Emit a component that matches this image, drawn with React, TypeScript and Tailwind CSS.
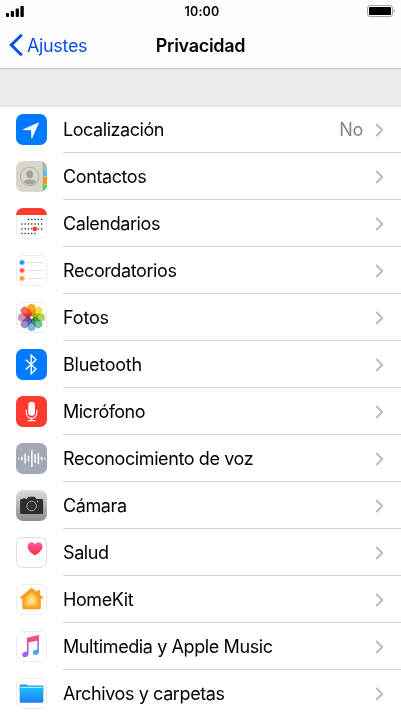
import type { ReactNode } from 'react'

type Row = {
  label: string
  icon: ReactNode
  value?: string
  tracking?: string
}

type TileProps = {
  fill?: string
  stroke?: string
  children: ReactNode
}

function Tile({ fill = '#ffffff', stroke, children }: TileProps) {
  return (
    <svg viewBox="0 0 31 31" className="block w-[31px] h-[31px] shrink-0">
      {stroke ? (
        <rect x="0.5" y="0.5" width="30" height="30" rx="6.5" fill={fill} stroke={stroke} />
      ) : (
        <rect width="31" height="31" rx="7" fill={fill} />
      )}
      {children}
    </svg>
  )
}

function LocationIcon() {
  return (
    <Tile fill="#007aff">
      <path d="M23.2 8.3 7.2 15.2c-.5.2-.4.9.2.9l7.7.2.2 7.4c0 .6.7.8 1 .2z" fill="#fff" />
    </Tile>
  )
}

function ContactsIcon() {
  return (
    <Tile fill="#d6d6cc">
      <defs>
        <clipPath id="contacts-tile">
          <rect width="31" height="31" rx="7" />
        </clipPath>
        <clipPath id="contacts-face">
          <circle cx="13.7" cy="15.5" r="8.3" />
        </clipPath>
      </defs>
      <g clipPath="url(#contacts-tile)">
        <rect x="27" width="4" height="8.5" fill="#b5b3ab" />
        <rect x="27" y="8.5" width="4" height="7" fill="#5ac1fa" />
        <rect x="27" y="16" width="4" height="7.5" fill="#ff9500" />
        <rect x="27" y="24" width="4" height="7" fill="#4cd964" />
        <rect x="26.8" width="0.5" height="31" fill="#9b9a91" />
      </g>
      <circle cx="13.7" cy="15.5" r="9.3" fill="none" stroke="#a8a59c" strokeWidth="0.9" />
      <g fill="#a8a097" clipPath="url(#contacts-face)">
        <ellipse cx="13.7" cy="13.3" rx="3.4" ry="3.9" />
        <ellipse cx="13.7" cy="23" rx="7.8" ry="4.4" />
      </g>
    </Tile>
  )
}

const calendarDots = [
  { y: 11.4, from: 2, to: 6 },
  { y: 16, from: 0, to: 6 },
  { y: 20.9, from: 0, to: 6 },
  { y: 25.5, from: 0, to: 4 },
]

function CalendarIcon() {
  return (
    <Tile stroke="#ededed">
      <path d="M0 7a7 7 0 0 1 7-7h17a7 7 0 0 1 7 7z" fill="#ff3b30" />
      {calendarDots.map(({ y, from, to }) =>
        Array.from({ length: to - from + 1 }, (_, i) => (
          <rect key={`${y}-${i}`} x={5.2 + (from + i) * 3.3} y={y - 0.65} width="1.3" height="1.3" fill="#222" />
        ))
      )}
      <circle cx="18.9" cy="20.9" r="2.3" fill="#ff3b30" />
    </Tile>
  )
}

function RemindersIcon() {
  const lines = [
    { y: 7.5, color: '#1685fb', halo: '#9bcbfd' },
    { y: 15.5, color: '#fc4b43', halo: '#fdb0ac' },
    { y: 23.5, color: '#fb9a18', halo: '#fdd093' },
  ]
  return (
    <Tile stroke="#ededed">
      {lines.map(({ y, color, halo }) => (
        <g key={y}>
          <circle cx="6" cy={y} r="3" fill={halo} />
          <circle cx="6" cy={y} r="1.8" fill={color} />
          <path d={`M11.5 ${y}h16`} stroke="#dcdcdc" strokeWidth="0.9" />
        </g>
      ))}
    </Tile>
  )
}

function PhotosIcon() {
  const petals = ['#fb9f1a', '#ecdf22', '#a3cf4c', '#62bd94', '#74ade0', '#9583c4', '#cf83b8', '#f9614f']
  return (
    <Tile stroke="#ededed">
      <g style={{ isolation: 'isolate' }}>
        {petals.map((color, i) => (
          <rect
            key={color}
            x="11.5"
            y="1.9"
            width="8"
            height="12.6"
            rx="4"
            fill={color}
            fillOpacity="0.92"
            transform={`rotate(${i * 45} 15.5 15.5)`}
            style={{ mixBlendMode: 'multiply' }}
          />
        ))}
      </g>
      <circle cx="15.5" cy="15.5" r="1" fill="#fff" />
    </Tile>
  )
}

function BluetoothIcon() {
  return (
    <Tile fill="#007aff">
      <path
        d="m9.8 10.7 10.2 9.4-4.8 4.8V6.1l4.8 4.7-10.2 9.7"
        fill="none"
        stroke="#fff"
        strokeWidth="1.4"
      />
    </Tile>
  )
}

function MicrophoneIcon() {
  return (
    <Tile fill="#ff3b30">
      <rect x="12.3" y="5.8" width="6.6" height="14" rx="3.3" fill="#fff" />
      <path
        d="M10.4 13.8v3.4a5.2 5.2 0 0 0 10.4 0v-3.4M15.6 22.4v2.2M11.8 24.6h7.6"
        fill="none"
        stroke="#fff"
        strokeWidth="1.1"
      />
    </Tile>
  )
}

function SpeechIcon() {
  const bars = [
    [2.7, 1.4], [5.9, 4], [9.1, 10], [12.5, 6], [15.9, 17], [19.1, 9], [22.4, 11], [25.6, 3.5], [28.7, 1.4],
  ]
  return (
    <Tile fill="#a2a8b5">
      {bars.map(([x, h]) => (
        <rect key={x} x={x - 0.75} y={15.5 - h / 2} width="1.5" height={h} rx="0.5" fill="#fff" />
      ))}
    </Tile>
  )
}

function CameraIcon() {
  return (
    <Tile fill="url(#camera-bg)">
      <defs>
        <linearGradient id="camera-bg" x1="0" y1="0" x2="0" y2="1">
          <stop offset="0" stopColor="#dededf" />
          <stop offset="1" stopColor="#8c8c90" />
        </linearGradient>
      </defs>
      <path
        d="M5.6 9h1.2V8.2h2.7V9h1.2c.8 0 1-2.2 2-2.2h5.7c1 0 1.2 2.2 2 2.2h5.2c1 0 1.5.5 1.5 1.5v12c0 1-.5 1.5-1.5 1.5h-20c-1 0-1.5-.5-1.5-1.5v-12c0-1 .5-1.5 1.5-1.5z"
        fill="#2e2e30"
      />
      <circle cx="15.6" cy="16" r="4.8" fill="#303032" stroke="#a8a8aa" strokeWidth="1" />
      <circle cx="21.5" cy="11.5" r="0.8" fill="#f7c325" />
    </Tile>
  )
}

function HealthIcon() {
  return (
    <Tile stroke="#dcdcde">
      <defs>
        <linearGradient id="heart" x1="0" y1="0" x2="0" y2="1">
          <stop offset="0" stopColor="#fb5bb2" />
          <stop offset="1" stopColor="#fd2d2c" />
        </linearGradient>
      </defs>
      <path
        d="M19 18.3c-3.6-2.2-7.4-5-7.4-8.9 0-2.5 1.7-4.2 3.8-4.2 1.6 0 2.8.8 3.6 2 .8-1.2 2-2 3.6-2 2.1 0 3.8 1.7 3.8 4.2 0 3.9-3.8 6.7-7.4 8.9z"
        fill="url(#heart)"
      />
    </Tile>
  )
}

function HomeIcon() {
  return (
    <Tile stroke="#ededed">
      <path
        d="M15.5 3.9 4.2 13.4l.6 1.1 1.9-.3V24c0 .6.4 1 1 1h15.8c.6 0 1-.4 1-1v-9.8l1.9.3.5-1.1-3.2-2.7V6.3h-2.4v2.3z"
        fill="#fd9a1c"
        stroke="#fd9a1c"
        strokeWidth="0.6"
        strokeLinejoin="round"
      />
      <path d="m15.5 7.2 6.9 5.8v10H8.7V13z" fill="#feb63a" />
      <path d="m15.5 9.9 4.7 4v7.2h-9.4v-7.2z" fill="#fecd5b" />
      <path d="m15.5 12.6 2.5 2.2v4.4h-5v-4.4z" fill="#fee288" />
    </Tile>
  )
}

function MusicIcon() {
  return (
    <Tile stroke="#ededed">
      <defs>
        <linearGradient id="note-left" x1="0" y1="4" x2="0" y2="26" gradientUnits="userSpaceOnUse">
          <stop offset="0" stopColor="#fb5c74" />
          <stop offset="0.3" stopColor="#ea4f86" />
          <stop offset="0.7" stopColor="#a568e0" />
          <stop offset="1" stopColor="#8a6cfb" />
        </linearGradient>
        <linearGradient id="note-right" x1="0" y1="4" x2="0" y2="24" gradientUnits="userSpaceOnUse">
          <stop offset="0" stopColor="#ee5479" />
          <stop offset="0.45" stopColor="#b273c6" />
          <stop offset="0.8" stopColor="#43a7fb" />
        </linearGradient>
      </defs>
      <path
        d="M21.3 5.3 23 4.3v16.4c0 2.1-1.6 3.2-3.5 3.2-1.5 0-2.6-.9-2.6-2.2 0-1.5 1.2-2.3 2.6-2.6 1.2-.3 1.8-.4 1.8-1.4z"
        fill="url(#note-right)"
      />
      <path
        d="M10.9 6.7 22.4 4.1c.3 0 .6.1.6.5v4.7l-10.4 2.1v11c0 2-1.5 3.7-3.6 3.7-1.7 0-2.9-.9-2.9-2.3 0-1.5 1.2-2.4 2.7-2.7 1.3-.3 2.1-.4 2.1-1.3z"
        fill="url(#note-left)"
      />
    </Tile>
  )
}

function FilesIcon() {
  return (
    <Tile stroke="#ededed">
      <defs>
        <linearGradient id="folder" x1="0" y1="0" x2="0" y2="1">
          <stop offset="0" stopColor="#20bdfb" />
          <stop offset="1" stopColor="#1c7cf3" />
        </linearGradient>
      </defs>
      <path d="M3.7 7.5c0-.6.4-1 1-1H10c1.2 0 1.2 1 2.3 1h14c.6 0 1 .4 1 1V14H3.7z" fill="#17a3ea" />
      <path d="M4.5 8.8h22v2h-22z" fill="#b7e8fd" />
      <path d="M3.7 9.9h23.6v13.6c0 .8-.4 1.2-1.2 1.2H4.9c-.8 0-1.2-.4-1.2-1.2z" fill="url(#folder)" />
    </Tile>
  )
}

const rows: Row[] = [
  { label: 'Localización', icon: <LocationIcon />, value: 'No', tracking: 'tracking-[-0.45px]' },
  { label: 'Contactos', icon: <ContactsIcon /> },
  { label: 'Calendarios', icon: <CalendarIcon />, tracking: 'tracking-[-0.42px]' },
  { label: 'Recordatorios', icon: <RemindersIcon /> },
  { label: 'Fotos', icon: <PhotosIcon />, tracking: 'tracking-[-0.15px]' },
  { label: 'Bluetooth', icon: <BluetoothIcon />, tracking: 'tracking-[-0.25px]' },
  { label: 'Micrófono', icon: <MicrophoneIcon />, tracking: 'tracking-[-0.5px]' },
  { label: 'Reconocimiento de voz', icon: <SpeechIcon /> },
  { label: 'Cámara', icon: <CameraIcon /> },
  { label: 'Salud', icon: <HealthIcon /> },
  { label: 'HomeKit', icon: <HomeIcon /> },
  { label: 'Multimedia y Apple Music', icon: <MusicIcon /> },
  { label: 'Archivos y carpetas', icon: <FilesIcon /> },
]

function StatusBar() {
  return (
    <div className="relative h-[22px] flex items-center justify-between px-1.5">
      <svg viewBox="0 0 18 11" className="w-[18px] h-[11px]" fill="#000">
        <rect x="0" y="7" width="3" height="4" rx="0.8" />
        <rect x="4.8" y="5" width="3.2" height="6" rx="0.8" />
        <rect x="9.7" y="2.5" width="3.2" height="8.5" rx="0.8" />
        <rect x="14.4" y="0" width="3.4" height="11" rx="0.8" />
      </svg>
      <span className="absolute inset-x-0 top-px pl-[3px] text-center text-[12.5px] leading-[22px] font-semibold tracking-[0.2px]">
        10:00
      </span>
      <svg viewBox="0 0 28 12" className="w-7 h-3">
        <rect x="0.5" y="0.5" width="25" height="11" rx="2.5" fill="none" stroke="#a3a3a3" />
        <rect x="2" y="2" width="22" height="8" rx="0.8" fill="#000" />
        <path d="M26.6 4v4c.8-.3 1.2-1.1 1.2-2s-.4-1.7-1.2-2z" fill="#a3a3a3" />
      </svg>
    </div>
  )
}

export default function App() {
  return (
    <div className="w-[401px] h-[713px] overflow-hidden flex flex-col bg-[#ebebf0] text-black font-['Inter','Liberation_Sans',sans-serif]">
      <header className="h-[69px] shrink-0 bg-[#fdfdfd] border-b border-[#c6c6c8]">
        <StatusBar />
        <div className="relative h-[46px] flex items-center">
          <button className="flex items-center pl-[9px] text-[#0a4fe8]">
            <svg viewBox="0 0 14 24" className="w-[14px] h-6" fill="none" stroke="currentColor" strokeWidth="3">
              <path d="M12.8 1.7 2.3 12l10.5 10.3" />
            </svg>
            <span className="ml-1 text-[18px] tracking-[-0.35px]">Ajustes</span>
          </button>
          <h1 className="absolute inset-x-0 text-center text-[18px] font-semibold tracking-[-0.3px] pointer-events-none">
            Privacidad
          </h1>
        </div>
      </header>

      <div className="h-[38px] shrink-0 border-b-2 border-[#e3e3e7]" />

      <ul className="bg-white">
        {rows.map(({ label, icon, value, tracking = 'tracking-[-0.4px]' }, i) => (
          <li key={label} className={`flex items-stretch pl-4 ${i === 0 ? 'h-[46px]' : 'h-[47px]'}`}>
            <div className="flex items-end pb-2">{icon}</div>
            <div
              className={`ml-4 pr-[17px] flex-1 flex items-center border-b border-[#d5d5d7] ${i === 0 ? '' : 'pt-0.5'}`}
            >
              <span className={`flex-1 text-[18px] leading-[22px] whitespace-nowrap ${tracking}`}>{label}</span>
              {value && (
                <span className="mr-3 text-[18px] leading-[22px] tracking-[-0.3px] text-[#858589]">{value}</span>
              )}
              <svg viewBox="0 0 9 14" className="w-[9px] h-[14px]" fill="none" stroke="#b9b9bd" strokeWidth="1.9">
                <path d="m1.2 1 6 6-6 6" />
              </svg>
            </div>
          </li>
        ))}
      </ul>
    </div>
  )
}
